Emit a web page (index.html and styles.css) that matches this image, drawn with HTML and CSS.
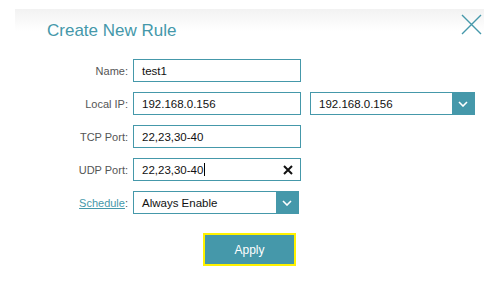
FILE: index.html
```html
<!DOCTYPE html>
<html lang="en">
<head>
    <meta charset="UTF-8">
    <title>Create New Rule</title>
    <link rel="stylesheet" href="styles.css">
</head>
<body>
    <div class="modal">
        <div class="modal-header">
            <h1 class="modal-title">Create New Rule</h1>
            <span class="close-btn">
                <svg width="21" height="21" viewBox="0 0 21 21">
                    <path d="M1 1 L20 20 M20 1 L1 20" stroke="#4598aa" stroke-width="1.4" fill="none"/>
                </svg>
            </span>
        </div>

        <div class="rule-form">
            <div class="form-row">
                <label class="form-label">Name:</label>
                <div class="text-field">test1</div>
            </div>
            <div class="form-row">
                <label class="form-label">Local IP:</label>
                <div class="text-field">192.168.0.156</div>
                <div class="select-field select-ip">
                    <span class="select-value">192.168.0.156</span>
                    <span class="select-arrow"><svg width="10" height="6" viewBox="0 0 10 6"><path d="M1 1 L5 5 L9 1" stroke="#fff" stroke-width="1.6" fill="none"/></svg></span>
                </div>
            </div>
            <div class="form-row">
                <label class="form-label">TCP Port:</label>
                <div class="text-field">22,23,30-40</div>
            </div>
            <div class="form-row">
                <label class="form-label">UDP Port:</label>
                <div class="text-field has-clear">22,23,30-40<span class="caret"></span>
                    <span class="clear-btn"><svg width="10" height="10" viewBox="0 0 10 10"><path d="M1 1 L9 9 M9 1 L1 9" stroke="#111" stroke-width="2" fill="none"/></svg></span>
                </div>
            </div>
            <div class="form-row">
                <label class="form-label"><a href="#" class="label-link">Schedule</a>:</label>
                <div class="select-field select-schedule">
                    <span class="select-value">Always Enable</span>
                    <span class="select-arrow"><svg width="10" height="6" viewBox="0 0 10 6"><path d="M1 1 L5 5 L9 1" stroke="#fff" stroke-width="1.6" fill="none"/></svg></span>
                </div>
            </div>
        </div>

        <button class="apply-btn">Apply</button>
    </div>
</body>
</html>
```

FILE: styles.css
```css
* {
    margin: 0;
    padding: 0;
    box-sizing: border-box;
    font-family: "Liberation Sans", Arial, sans-serif;
}

body {
    background-color: #fff;
    width: 500px;
    height: 281px;
    overflow: hidden;
}

.modal {
    margin: 9px 16px 0 15px;
    height: 272px;
    background: linear-gradient(#f2f2f2, #fff 22px);
}

.modal-header {
    display: flex;
    justify-content: space-between;
    align-items: flex-start;
    padding: 0 2px 0 32px;
}

.modal-title {
    margin-top: 12px;
    font-size: 17px;
    line-height: 20px;
    font-weight: normal;
    color: #4598aa;
}

.close-btn {
    display: block;
    margin-top: 5px;
    width: 21px;
    height: 21px;
}

.close-btn svg {
    display: block;
}

.rule-form {
    margin-top: 18px;
}

.form-row {
    display: flex;
    align-items: center;
    height: 23px;
    margin-bottom: 10px;
}

.form-label {
    width: 113px;
    margin-right: 5px;
    text-align: right;
    font-size: 11px;
    color: #555;
}

.label-link {
    color: #4598aa;
}

.text-field {
    position: relative;
    display: flex;
    align-items: center;
    width: 168px;
    height: 23px;
    padding-left: 8px;
    border: 1px solid #4598aa;
    font-size: 11.5px;
    color: #111;
}

.caret {
    display: inline-block;
    width: 1px;
    height: 13px;
    margin-left: 1px;
    background-color: #000;
}

.clear-btn {
    position: absolute;
    right: 7px;
    top: 6px;
}

.clear-btn svg {
    display: block;
}

.select-field {
    display: flex;
    height: 23px;
    border: 1px solid #4598aa;
    font-size: 11.5px;
    color: #111;
}

.select-ip {
    width: 165px;
    margin-left: 9px;
}

.select-schedule {
    width: 166px;
}

.select-value {
    flex: 1;
    display: flex;
    align-items: center;
    padding-left: 8px;
}

.select-arrow {
    display: flex;
    align-items: center;
    justify-content: center;
    width: 22px;
    background-color: #4598aa;
}

.apply-btn {
    display: block;
    margin: 19px 0 0 188px;
    width: 93px;
    height: 33px;
    border: 2px solid #fff200;
    background-color: #4598aa;
    color: #fff;
    font-size: 12px;
}
```
